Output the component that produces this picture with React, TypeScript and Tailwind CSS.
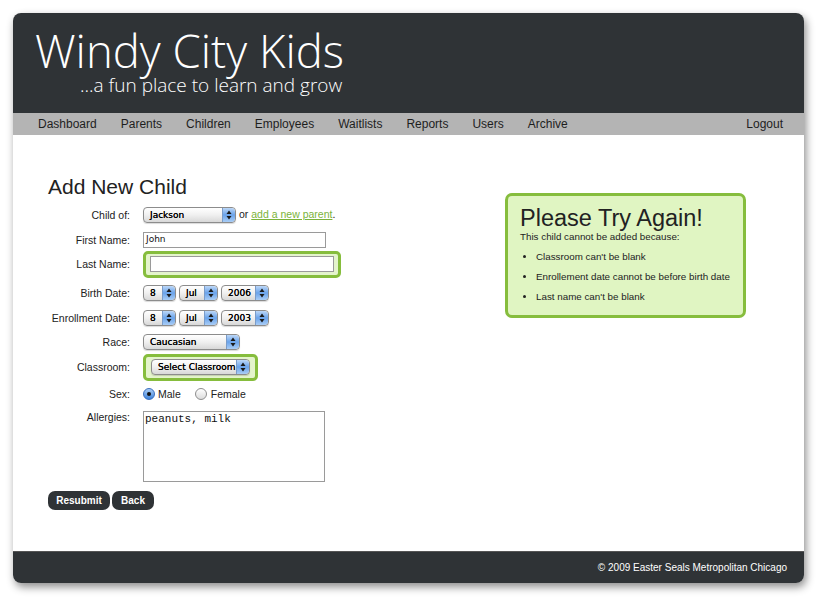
import React from "react";

const navItems = [
  "Dashboard",
  "Parents",
  "Children",
  "Employees",
  "Waitlists",
  "Reports",
  "Users",
  "Archive",
];

const ctl = { fontFamily: '"DejaVu Sans", Verdana, sans-serif' };

function Arrows() {
  return (
    <div className="flex h-full w-[13px] items-center justify-center rounded-r-[4px] border-l border-[#7a9cc9] bg-gradient-to-b from-[#bcd7f7] via-[#6aa3ea] to-[#a9cdf6]">
      <svg width="6" height="10" viewBox="0 0 6 10">
        <path d="M3 0.5 L5.5 4 L0.5 4 Z" fill="#1a1a1a" />
        <path d="M3 9.5 L5.5 6 L0.5 6 Z" fill="#1a1a1a" />
      </svg>
    </div>
  );
}

function Select({ value, width }: { value: string; width: string }) {
  return (
    <div
      className={`flex h-[16px] ${width} items-center rounded-[4px] border border-[#8c8c8c] bg-gradient-to-b from-white via-[#f0f0f0] to-[#d8d8d8] shadow-[0_1px_1px_rgba(0,0,0,0.15)]`}
    >
      <span
        className="flex-1 whitespace-nowrap pl-[6px] text-[9px] leading-none text-black [text-shadow:0_0_0.4px_#000]"
        style={ctl}
      >
        {value}
      </span>
      <Arrows />
    </div>
  );
}

function Label({ children }: { children: React.ReactNode }) {
  return (
    <div className="w-[82px] shrink-0 text-right text-[10.5px] leading-[12px] text-[#222]">
      {children}
    </div>
  );
}

function DateRow({ year }: { year: string }) {
  return (
    <div className="flex gap-[3px]">
      <Select value="8" width="w-[33px]" />
      <Select value="Jul" width="w-[39px]" />
      <Select value={year} width="w-[48px]" />
    </div>
  );
}

export default function App() {
  return (
    <div
      className="min-h-[600px] bg-white pl-[13px] pt-[13px]"
      style={{ fontFamily: '"Liberation Sans", Arial, sans-serif' }}
    >
      <div className="flex h-[570px] w-[791px] flex-col overflow-hidden rounded-[8px] bg-white shadow-[2px_4px_8px_rgba(0,0,0,0.45)]">
        {/* header */}
        <div
          className="h-[100px] shrink-0 bg-[#2f3336] pl-[22px] pt-[14px]"
          style={{ fontFamily: '"Open Sans", sans-serif' }}
        >
          <h1 className="text-[45.5px] font-light leading-[46px] text-white">
            Windy City Kids
          </h1>
          <p className="mt-[2px] pl-[45px] text-[19px] font-light leading-[20px] text-white">
            ...a fun place to learn and grow
          </p>
        </div>

        {/* nav */}
        <div className="flex h-[22px] shrink-0 items-center justify-between bg-[#b4b4b4] pl-[25px] pr-[21px] text-[12px] text-[#1e1e1e]">
          <div className="flex gap-[24px]">
            {navItems.map((n) => (
              <span key={n}>{n}</span>
            ))}
          </div>
          <span>Logout</span>
        </div>

        {/* body */}
        <div className="flex flex-1 pl-[35px] pt-[41px]">
          <div className="w-[440px]">
            <h2 className="text-[21px] leading-[22px] text-[#222]">Add New Child</h2>
            <div className="mt-[5px] flex flex-col">
              <div className="flex h-[24px] items-center gap-[13px]">
                <Label>Child of:</Label>
                <div className="flex items-center gap-[3px]">
                  <Select value="Jackson" width="w-[93px]" />
                  <span className="text-[10.5px] text-[#222]">
                    or{" "}
                    <a className="text-[#7bb33a] underline" href="#">
                      add a new parent
                    </a>
                    .
                  </span>
                </div>
              </div>
              <div className="mt-[1px] flex h-[24px] items-center gap-[13px]">
                <Label>First Name:</Label>
                <div
                  className="flex h-[16px] w-[183px] items-center border border-[#9a9a9a] bg-white pl-[2px] text-[9px] text-[#111]"
                  style={ctl}
                >
                  John
                </div>
              </div>
              <div className="flex h-[24px] items-center gap-[13px]">
                <Label>Last Name:</Label>
                <div className="rounded-[5px] border-[3px] border-[#86bd3d] bg-[#e4f4cc] px-[4px] py-[2.5px]">
                  <div className="h-[16px] w-[184px] border border-[#9a9a9a] bg-white" />
                </div>
              </div>
              <div className="mt-[5px] flex h-[24px] items-center gap-[13px]">
                <Label>Birth Date:</Label>
                <DateRow year="2006" />
              </div>
              <div className="mt-[1px] flex h-[24px] items-center gap-[13px]">
                <Label>Enrollment Date:</Label>
                <DateRow year="2003" />
              </div>
              <div className="flex h-[24px] items-center gap-[13px]">
                <Label>Race:</Label>
                <Select value="Caucasian" width="w-[97px]" />
              </div>
              <div className="mt-[1px] flex h-[24px] items-center gap-[13px]">
                <Label>Classroom:</Label>
                <div className="rounded-[5px] border-[3px] border-[#86bd3d] bg-[#e4f4cc] px-[5px] py-[2.5px]">
                  <Select value="Select Classroom" width="w-[99px]" />
                </div>
              </div>
              <div className="mt-[3px] flex h-[24px] items-center gap-[13px]">
                <Label>Sex:</Label>
                <div className="flex items-center text-[10.5px] text-[#222]">
                  <span className="flex h-[12px] w-[12px] items-center justify-center rounded-full border border-[#3a6fbf] bg-gradient-to-b from-[#aacdf5] to-[#3d83da]">
                    <span className="h-[4px] w-[4px] rounded-full bg-[#111]" />
                  </span>
                  <span className="ml-[3px] mr-[14px] mt-[2px]">Male</span>
                  <span className="h-[12px] w-[12px] rounded-full border border-[#8d8d8d] bg-gradient-to-b from-white to-[#dcdcdc]" />
                  <span className="ml-[4px] mt-[2px]">Female</span>
                </div>
              </div>
              <div className="mt-[5px] flex items-start gap-[13px]">
                <Label>Allergies:</Label>
                <div
                  className="h-[71px] w-[182px] border border-[#9a9a9a] bg-white pl-[1px] pt-[1px] text-[11px] leading-[12px] text-[#111]"
                  style={{ fontFamily: '"Liberation Mono", "Courier New", monospace' }}
                >
                  peanuts, milk
                </div>
              </div>
            </div>
            <div className="mt-[9px] flex gap-[2px] text-[10px] font-bold text-white">
              <button className="h-[19px] w-[62px] rounded-[7px] bg-[#2f3336]">Resubmit</button>
              <button className="h-[19px] w-[42px] rounded-[7px] bg-[#2f3336]">Back</button>
            </div>
          </div>

          <div className="ml-[17px] mt-[17px]">
            <div className="h-[125px] w-[241px] rounded-[7px] border-[3px] border-[#86bd3d] bg-[#e0f5c2] pl-[12px] pt-[9px] text-[#222]">
              <h3 className="text-[23.5px] leading-[26px]">Please Try Again!</h3>
              <p className="text-[9.8px] leading-[12px]">This child cannot be added because:</p>
              <ul className="mt-[4px] list-disc pl-[16px] text-[9.8px] leading-[20px]">
                <li>Classroom can't be blank</li>
                <li>Enrollement date cannot be before birth date</li>
                <li>Last name can't be blank</li>
              </ul>
            </div>
          </div>
        </div>

        {/* footer */}
        <div className="flex h-[32px] shrink-0 items-center justify-end border-t border-[#555] bg-[#2f3336] pr-[17px] text-[10px] text-white">
          © 2009 Easter Seals Metropolitan Chicago
        </div>
      </div>
    </div>
  );
}
